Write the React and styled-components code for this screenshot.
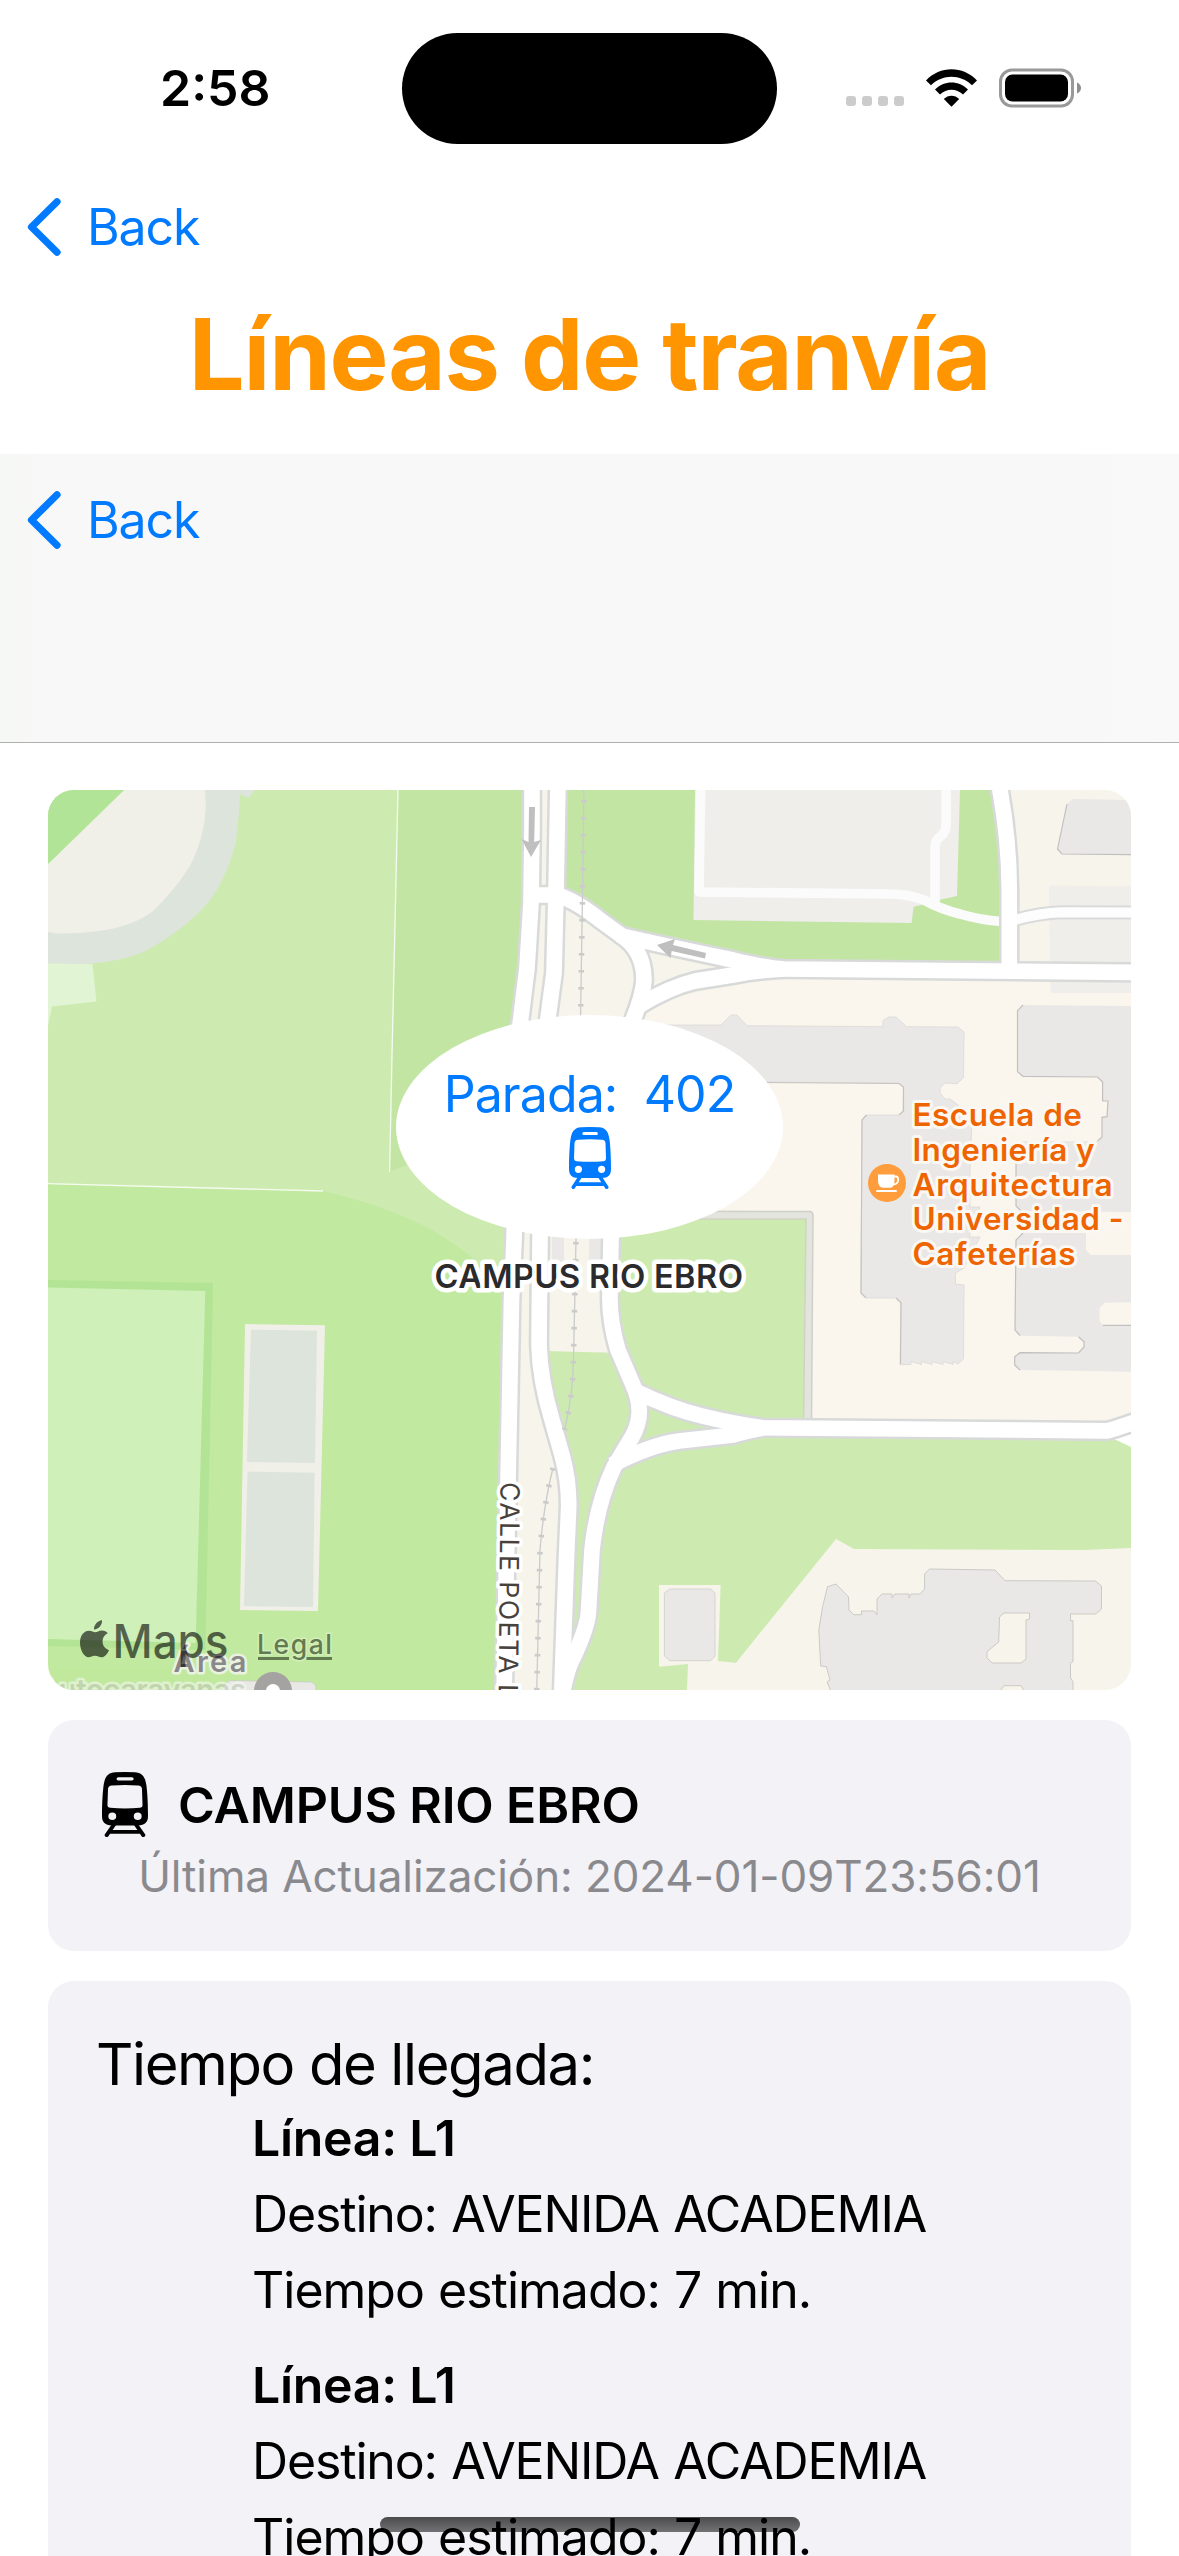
import React from "react";
import styled, { createGlobalStyle } from "styled-components";

const GlobalStyle = createGlobalStyle`
  * { box-sizing: border-box; }
  html, body { margin: 0; padding: 0; background: #fff; }
  body { font-family: Inter, "Liberation Sans", sans-serif; color: #000; overflow: hidden; }
`;

const Screen = styled.main`
  position: relative;
  display: flex;
  flex-direction: column;
  width: 1179px;
  height: 2556px;
  overflow: hidden;
  background: #fff;
`;

const StatusBar = styled.header`
  display: grid;
  grid-template-columns: 402px 375px 402px;
  align-items: center;
  flex: none;
  height: 177px;
`;

const Clock = styled.time`
  margin-bottom: 2px;
  padding-left: 160px;
  font-size: 50px;
  font-weight: 600;
  line-height: 60px;
  white-space: nowrap;
`;

const Island = styled.div`
  height: 111px;
  border-radius: 56px;
  background: #000;
`;

const Indicators = styled.div`
  display: flex;
  align-items: center;
  height: 40px;
  margin-bottom: 2px;
  padding-left: 69px;
`;

const SignalDots = styled.div`
  display: flex;
  align-self: flex-end;
  gap: 6px;
  margin: 0 22px 2px 0;
`;

const Dot = styled.span`
  width: 10px;
  height: 10px;
  border-radius: 3px;
  background: #ccc;
`;

const WifiGlyph = styled.svg`
  width: 51px;
  height: 38px;
  margin-right: 22px;
`;

const BatteryGlyph = styled.svg`
  width: 83px;
  height: 40px;
`;

const NavBar = styled.nav`
  display: flex;
  align-items: center;
  flex: none;
  height: 99px;
  padding-left: 26px;
`;

const BackButton = styled.a`
  display: flex;
  align-items: center;
  gap: 25px;
  color: #007aff;
  font-size: 50px;
  line-height: 60px;
  letter-spacing: -1.1px;
`;

const Chevron = styled.svg`
  width: 36px;
  height: 60px;
`;

const PageTitle = styled.h1`
  flex: none;
  height: 178px;
  margin: 0;
  text-align: center;
  color: #ff9500;
  font-size: 99px;
  font-weight: 700;
  line-height: 156px;
  letter-spacing: -1.2px;
  white-space: nowrap;
`;

const InnerBar = styled.section`
  flex: none;
  height: 289px;
  padding-top: 16px;
  border-bottom: 1px solid #b0b0b0;
  background: linear-gradient(90deg, #f6f8f5 0, #f8f8f8 60px, #f8f8f8 1080px, #f9f9f9 100%);
`;

const Content = styled.div`
  display: flex;
  flex-direction: column;
  flex: none;
  gap: 30px;
  padding: 47px 48px 0;
`;

const MapFrame = styled.section`
  position: relative;
  height: 900px;
  border-radius: 26px;
  overflow: hidden;
`;

const MapCanvas = styled.svg`
  display: block;
  width: 1083px;
  height: 900px;
  font-family: Inter, "Liberation Sans", sans-serif;
`;

const StopMarker = styled.div`
  position: absolute;
  left: 348px;
  top: 225px;
  display: flex;
  flex-direction: column;
  align-items: center;
  width: 387px;
  height: 224px;
  padding-top: 49px;
  border-radius: 50%;
  background: #fff;
  color: #007aff;
  font-size: 50px;
  line-height: 60px;
  letter-spacing: -0.9px;
  white-space: pre;
`;

const TramGlyph = styled.svg`
  flex: none;
  width: ${(p) => p.$w}px;
  height: ${(p) => p.$h}px;
  margin-top: ${(p) => p.$top || 0}px;
`;

const Card = styled.section`
  display: flex;
  flex-direction: column;
  height: ${(p) => p.$h}px;
  padding: ${(p) => p.$pad};
  border-radius: 26px;
  background: #f2f2f7;
`;

const StopRow = styled.div`
  display: flex;
  align-items: center;
  gap: 30px;
  height: 67px;
  padding-left: 6px;
`;

const StopName = styled.h2`
  margin: 0;
  font-size: 50px;
  font-weight: 600;
  line-height: 60px;
  letter-spacing: -0.15px;
  white-space: nowrap;
`;

const Updated = styled.p`
  margin: 11px 0 0;
  text-align: center;
  color: #8a8a8e;
  font-size: 44px;
  line-height: 54px;
  letter-spacing: -0.1px;
  white-space: nowrap;
`;

const ArrivalsTitle = styled.h3`
  margin: 0;
  font-size: 58px;
  font-weight: 400;
  line-height: 71px;
  letter-spacing: -1.4px;
  white-space: nowrap;
`;

const ArrivalList = styled.ul`
  display: flex;
  flex-direction: column;
  gap: 19px;
  margin: 0;
  padding: 0 0 0 156px;
  list-style: none;
`;

const Arrival = styled.li`
  display: flex;
  flex-direction: column;
`;

const ArrivalLine = styled.span`
  font-size: 50px;
  font-weight: ${(p) => (p.$strong ? 600 : 400)};
  line-height: 76px;
  letter-spacing: ${(p) => p.$track}px;
  word-spacing: ${(p) => p.$gap || 0}px;
  white-space: nowrap;
`;

const HomeIndicator = styled.div`
  position: absolute;
  left: 380px;
  top: 2517px;
  width: 420px;
  height: 15px;
  border-radius: 8px;
  background: linear-gradient(rgba(0, 0, 0, 0.69), rgba(0, 0, 0, 0.53));
`;

const arrivals = [
  { line: "L1", destination: "AVENIDA ACADEMIA", minutes: 7 },
  { line: "L1", destination: "AVENIDA ACADEMIA", minutes: 7 },
];

function Tram({ w, h, top }) {
  return (
    <TramGlyph $w={w} $h={h} $top={top} viewBox="0 0 42 62" preserveAspectRatio="none" aria-hidden="true">
      <path
        fill="currentColor"
        fillRule="evenodd"
        d="M12 .3Q21-.3 30 .3C37 .8 39.5 5 40.6 13C41.5 21 42 30 42 42C42 48 39 51 33 51H9C3 51 0 48 0 42C0 30 .5 21 1.4 13C2.5 5 5 .8 12 .3ZM14.8 5A1.5 1.5 0 0 0 14.8 8H27.4A1.5 1.5 0 0 0 27.4 5ZM9 12.8Q21 11.8 33 12.8Q36.3 13 36.5 16L37 31.5Q37 34 34.5 34.2Q21 35.2 7.5 34.2Q5 34 5 31.5L5.5 16Q5.7 13 9 12.8ZM9.4 38.7A3.6 3.6 0 1 0 9.4 45.9A3.6 3.6 0 1 0 9.4 38.7ZM32.6 38.7A3.6 3.6 0 1 0 32.6 45.9A3.6 3.6 0 1 0 32.6 38.7Z"
      />
      <path d="M11 50L4.3 60.2M31 50L37.7 60.2M7.5 57.1H34.5" fill="none" stroke="currentColor" strokeWidth="3.6" strokeLinecap="round" />
    </TramGlyph>
  );
}

function Back() {
  return (
    <NavBar>
      <BackButton>
        <Chevron viewBox="0 0 36 60" aria-hidden="true">
          <path d="M31 4.8L5.5 30L31 55.2" fill="none" stroke="#007aff" strokeWidth="7.2" strokeLinecap="round" strokeLinejoin="round" />
        </Chevron>
        Back
      </BackButton>
    </NavBar>
  );
}

const roads = [
  "M532 780V830L531 903L527 968L520 1025L514 1240L511.500 1300L505 1640L504 1700",
  "M558 780L556 893L554 973L548 1018L540 1240L539 1345Q540 1380 552 1420L562 1455Q569 1480 568.700 1507L566.500 1557L561.500 1700",
  "M532 895H557Q575 900 600 920L622 936Q680 949 733 960Q765 968 784 969L1140 972.500",
  "M619 934Q644 949 644 980Q643 995 633 1020L611 1240L610 1293Q609 1320 618 1350L633 1385Q646 1413 632 1437L614 1467Q597 1503 592 1550L588.400 1613Q587 1628 574 1656Q567 1668 562 1695",
  "M640 1005Q670 987 695 981L733 975Q760 970 784 969",
  "M635 1391Q672 1409 702 1416Q735 1424 763 1427.700L1107 1430.900Q1118 1428 1140 1420",
  "M612 1465Q650 1445 679 1441L733 1435Q750 1430 763 1428",
  "M996 770Q1009 830 1009.300 890V972",
];

const rails = [
  "M584 783L582.500 895L580.600 1013L576 1240L573.500 1360Q573 1395 564.500 1430",
  "M553 1468Q544 1503 540 1550L536.500 1700",
];

const poi = [
  { text: "Escuela de", y: 1126, w: 169.5 },
  { text: "Ingeniería y", y: 1161, w: 182 },
  { text: "Arquitectura", y: 1195.5, w: 200 },
  { text: "Universidad -", y: 1230, w: 211 },
  { text: "Cafeterías", y: 1264.5, w: 163 },
];

function Halo({ children, halo = "#fff", haloWidth = 7, ...rest }) {
  return (
    <text stroke={halo} strokeWidth={haloWidth} strokeLinejoin="round" paintOrder="stroke" lengthAdjust="spacing" {...rest}>
      {children}
    </text>
  );
}

function CampusMap() {
  return (
    <MapCanvas viewBox="48 790 1083 900">
      <rect x="48" y="790" width="1083" height="900" fill="#f7f4eb" />

      {/* west parkland */}
      <path fill="#cdebb0" d="M48 790H522L500 1340L48 1340Z" />
      <path fill="#c3e5a4" d="M398 790H524L520 960L505 1130L407 1165L389.600 1172Z" />
      <path fill="#c1e99f" d="M48 1184L323 1191Q385 1205 432 1230Q465 1250 482 1266Q500 1280 512 1290L504 1690H48Z" />
      <path fill="none" stroke="#f5fbef" strokeWidth="1.300" d="M398 790L395 924L392 1055L389.600 1172M48 1183.700L190 1187.500L323 1191" />

      {/* stadium */}
      <path fill="#dce4db" d="M204 790H255L248.500 798L240 794L239 812L236 841Q230 870 211 899Q198 916 173 934Q150 950 136 955Q105 965 66 964.500L48 963.500V920L180 860Z" />
      <path fill="#f0efe8" d="M124 790H205L206 807Q204 840 190 866Q175 890 153 911Q137 924 106 930Q80 934 56 933.500L48 932V864Z" />
      <path fill="#b1e496" d="M48 790H124L48 864Z" />
      <path fill="#e1f4d4" d="M48 963.500L92.500 964L96.500 1001.500L52 1006.500L48 1026Z" />

      {/* playing field and courts */}
      <path fill="#b3e496" d="M48 1280L213 1283L205.400 1650L48 1646Z" />
      <path fill="#cff0b9" d="M48 1287.500L205.300 1291L195.600 1643L48 1639Z" />
      <path fill="#f0efe8" d="M245 1324L325 1325.300L318 1611L240 1610Z" />
      <path fill="#dce4db" d="M251 1329.700L317 1330.700L315 1463L247 1462ZM247.600 1471.700L314.600 1472.700L313 1607L244 1606Z" />
      <path fill="#e9e8e6" stroke="#c8d3bd" d="M222 1692L224 1685.700L229.600 1680.500L312 1682L316 1685.700V1692Z" />

      {/* north block */}
      <path fill="#c3e5a4" d="M562 790H990L1005 860V972L784 969L620 934L580 903L562 894Z" />
      <path fill="#efeeeb" d="M695 790H960L957 896L941 899.500L913.500 907L911.600 923L693.500 920Z" />
      <path fill="none" stroke="#fbfbfb" strokeWidth="9.600" strokeLinejoin="round" d="M700.700 786L699 892L890 894Q908 894 924 900Q940 909 960 914Q980 920 1002 921.500M946 786V825Q946 832 941 836Q935 840 935 848V903" />
      <path fill="#efeeeb" d="M1049 885.500L1131 886V994L1050.600 993Z" />
      <path fill="#e9e8e6" d="M1067 804L1073 799L1131 800V854.700L1062 854L1057.500 849Z" />
      <path fill="none" stroke="#c1c0be" strokeWidth="1.200" d="M1067 804L1057.500 849L1062 854L1131 854.700" />

      {/* campus */}
      <path fill="#faf6ee" d="M634 1030L660 1000L784 975L1050 977V993H1131V1424L812 1422V1212H640Z" />
      <path
        fill="#e9e8e6"
        stroke="#dbd9d5"
        strokeWidth=".8"
        d="M650 1025H721L731 1015H737L747 1025.700L883 1026.700V1020.700L888.700 1017H896L906.600 1026.700L958 1027L964 1032L963.500 1077.700L957 1083.700L945 1083L940 1088V1093L945 1099H950L958 1105L971.700 1128L970 1173V1207H980L969 1237H980L964 1268L955.500 1273V1284L964 1285L963.500 1359L958 1364L953 1361.500V1364.500L943 1361.500V1364.500L932 1361.500V1364.500L921.500 1361.500V1364.500L911 1361.500V1364.500L900 1364.700L901 1302.700L896 1298H866L861 1293L862 1120L866.500 1115H899L903 1111L903.500 1087L899 1083L763 1082H650Z"
      />
      <path fill="none" stroke="#c5c3c0" strokeWidth="1.200" d="M763 1082.500L899 1083.500L903.500 1087V1111L899 1115M866.500 1115L862 1120L861 1293L866 1298M896 1298L901 1302.700L900.500 1364" />
      <path fill="#e9e8e6" d="M1023 1005L1131 1006V1212L1021 1211L1016 1205.700V1145L1023 1141H1097.600L1102 1137V1117.300L1107 1116.700L1108 1101H1102.600V1081.700L1097.600 1076.700L1023 1076L1017.500 1071.700V1010.700Z" />
      <path fill="none" stroke="#c1c0be" strokeWidth="1.200" d="M1023 1005L1017.500 1010.700V1071.700L1023 1076.300L1097.600 1077L1102.600 1082V1101H1108L1107 1116.700L1102 1117.300V1137L1097.600 1141M1016 1145V1206L1021 1211" />
      <path
        fill="#e9e8e6"
        d="M1023 1233H1086V1250L1091 1255H1131V1302.300L1105 1302.700L1099.500 1308V1321L1103 1325H1131V1371.700L1020 1370L1014.700 1365V1356.700L1020 1352.700L1078.500 1353L1084 1347V1341.700L1078.500 1336.700L1020 1335.700L1014.700 1330L1016 1240Z"
      />
      <path fill="none" stroke="#c1c0be" strokeWidth="1.200" d="M1023 1233L1016 1240L1015 1330L1020 1335.500M1078.500 1336.700L1084 1341.700V1347L1078.500 1353L1020 1352.700L1014.700 1356.700V1365L1020 1370M1103 1325.300H1131" />

      {/* central lawns */}
      <path fill="#e4e4df" stroke="#cfd0ca" strokeWidth="1.500" d="M600 1211L811 1211.500L813 1214L811.500 1424H600Z" />
      <path fill="#cdebb0" stroke="#cfd3c4" strokeWidth="1.500" d="M616 1219H806L803.500 1424H616Z" />
      <path fill="#f7f4eb" d="M540 1200H611L610 1330L618 1353L548 1351L538 1300Z" />
      <path fill="#e9e8e6" d="M552 1230H564V1268H552ZM589 1230H603V1268H589Z" />
      <path
        fill="#cdebb0"
        fillRule="evenodd"
        d="M547 1351L618 1353L650 1400L763 1428L1131 1431V1548L1084 1550L854 1549L836 1539L736 1662.700L718 1661L720.600 1585H659V1666.700L688 1664L687 1690H562L570 1500Q562 1460 552 1420Z"
      />
      <path fill="#fff" d="M1112 1438L1131 1447V1430Z" />
      <path fill="#e9e8e6" stroke="#d5d4d0" strokeWidth="1" d="M669.800 1589H710.600L715 1593V1656L710.600 1660.700H669.800L664.400 1656V1593Z" />

      {/* south-east building */}
      <path
        fill="#e9e8e6"
        fillRule="evenodd"
        stroke="#cbcac6"
        strokeWidth="1"
        d="M836 1584L827.500 1586.700L822.600 1606.700L818.800 1630L820.700 1666L826.400 1666.700L830 1680L827 1682L831 1691H1000L1004 1685.700H1021L1024 1691H1073V1681.700L1070.500 1678V1663L1073 1661.700V1620.700H1070.500V1614H1095.700L1101.500 1609V1586L1095.700 1581L1005 1580.700L995 1570L929.500 1569L924.600 1574V1589L920 1594H911L909 1598V1594H895L892 1598V1594H882L877 1599V1615L874 1611H861.500V1614.700H853.500L849 1610L848.500 1597ZM1004 1613H1029.600V1619L1026 1620V1659L1021 1663H992L987 1657.700V1651.700L998.700 1642L999.500 1617Z"
      />

      {/* roads: casing first, then surface */}
      <g fill="none" strokeLinejoin="round">
        <path stroke="#d9dbda" strokeWidth="14" d="M1012 921Q1035 913.500 1061 912.300L1140 912.500" />
        {roads.map((d) => (
          <path key={d} d={d} stroke="#d8dad9" strokeWidth="20.600" />
        ))}
        <path stroke="#fdfdfd" strokeWidth="10" d="M1008 922Q1035 913.500 1061 912.300L1140 912.500" />
        {roads.map((d) => (
          <path key={d} d={d} stroke="#fff" strokeWidth="15.600" />
        ))}
        {rails.map((d) => (
          <g key={d} stroke="#cacbca">
            <path d={d} strokeWidth="1.300" />
            <path d={d} strokeWidth="5.500" strokeDasharray="2.600 14.400" />
          </g>
        ))}
      </g>

      <g fill="#bfbfbf">
        <path d="M529 807H535L534.200 842L541 840L531 857L521.500 839L528.500 842Z" />
        <path d="M657 945L675 939L673 945L706 953L705 958.500L671.700 951L670.500 958Z" />
      </g>

      <Halo x="0" y="0" transform="translate(500.500 1482) rotate(90.500)" fontSize="26.500" textLength="217" haloWidth={7} fill="#47413c">
        CALLE POETA L
      </Halo>

      <Halo x="434.500" y="1288" fontSize="33" fontWeight="600" textLength="308.500" haloWidth={9} fill="#2b2b2d">
        CAMPUS RIO EBRO
      </Halo>

      <circle cx="887" cy="1183" r="19" fill="#ff9c3c" />
      <path fill="#fff" d="M878 1174.500H894.500V1181Q894.500 1187.700 890 1187.700H883Q878.500 1187.700 878 1181Z" />
      <path fill="none" stroke="#fff" strokeWidth="1.800" d="M893.500 1176.500H896Q898.200 1176.500 898.200 1180Q898 1184.500 892.500 1184.500" />
      <rect x="876" y="1190" width="21" height="2" rx="1" fill="#fff" />
      {poi.map((l) => (
        <Halo key={l.text} x="912.500" y={l.y} fontSize="31.500" fontWeight="600" textLength={l.w} haloWidth={6} halo="#fbf8f4" fill="#ee6400">
          {l.text}
        </Halo>
      ))}

      <circle cx="273" cy="1691" r="19" fill="#a5a3a1" />
      <circle cx="273" cy="1691" r="7" fill="#fff" />
      <Halo x="173.500" y="1672" fontSize="29" fontWeight="600" textLength="73" haloWidth={5} halo="#e9f3e0" fill="#89888b">
        Área
      </Halo>
      <g opacity=".6">
        <Halo x="38" y="1700" fontSize="29" fontWeight="600" textLength="208" haloWidth={5} halo="#f3f7ee" fill="#c0c8b8">
          Autocaravanas
        </Halo>
      </g>

      <g fill="#000" fillOpacity=".6">
        <path d="M102 1620.300C102.500 1624.500 98.500 1629.700 94 1629.500C93.500 1625 98 1620.600 102 1620.300ZM107.800 1633.300C103.800 1635.500 102.500 1638.500 102.600 1642C102.700 1646 105.300 1648.500 109 1650.200C107.500 1653.800 104.500 1657.300 101.500 1657.300C99 1657.300 98 1655.800 95 1655.800C92 1655.800 91 1657.300 88.500 1657.300C84.500 1657.300 80 1650.500 80 1642.500C80 1635.500 84 1630.700 89 1630.700C91.700 1630.700 93.500 1632.300 95.200 1632.300C97 1632.300 98.800 1630.500 102 1630.500C104.300 1630.500 106.500 1631.500 107.800 1633.300Z" />
        <text x="112.500" y="1657.700" fontSize="46.500" fontWeight="500" textLength="116" lengthAdjust="spacingAndGlyphs">
          Maps
        </text>
      </g>
      <text x="257" y="1653.500" fontSize="26.500" fontWeight="500" fill="#637b50" textLength="75" stroke="#d3efba" strokeWidth="3" paintOrder="stroke">
        Legal
      </text>
      <path d="M258 1658.500H289M306.500 1658.500H332" stroke="#637b50" strokeWidth="3" />
    </MapCanvas>
  );
}

export default function App() {
  return (
    <>
      <GlobalStyle />
      <Screen>
        <StatusBar>
          <Clock>2:58</Clock>
          <Island />
          <Indicators>
            <SignalDots>
              <Dot />
              <Dot />
              <Dot />
              <Dot />
            </SignalDots>
            <WifiGlyph viewBox="0 0 51 38" aria-hidden="true">
              <path d="M0 11.500C14-3.500 37-3.500 51 11.500L46 16.300C34.500 4.800 16.500 4.800 5 16.300Z" />
              <path d="M9 20.500C18 11 33 11 42 20.500L37 25.500C30.500 19 20.500 19 14 25.500Z" />
              <path d="M17.800 30C22 25.500 29 25.500 33.200 30L25.500 37.800Z" />
            </WifiGlyph>
            <BatteryGlyph viewBox="0 0 83 40" aria-hidden="true">
              <rect x="1.500" y="2" width="72" height="36" rx="11.500" fill="none" stroke="#999" strokeWidth="3" />
              <rect x="6" y="6.500" width="63" height="27" rx="7.500" />
              <path d="M78 14.500Q82 16.500 82 20T78 25.500Z" fill="#8e8e8e" />
            </BatteryGlyph>
          </Indicators>
        </StatusBar>
        <Back />
        <PageTitle>Líneas de tranvía</PageTitle>
        <InnerBar>
          <Back />
        </InnerBar>
        <Content>
          <MapFrame>
            <CampusMap />
            <StopMarker>
              <span>{"Parada:  402"}</span>
              <Tram w={42} h={62} top={3} />
            </StopMarker>
          </MapFrame>
          <Card $h={231} $pad="51px 48px 0">
            <StopRow>
              <Tram w={46} h={65} />
              <StopName>CAMPUS RIO EBRO</StopName>
            </StopRow>
            <Updated>Última Actualización: 2024-01-09T23:56:01</Updated>
          </Card>
          <Card $h={640} $pad="48px 48px 0">
            <ArrivalsTitle>Tiempo de llegada:</ArrivalsTitle>
            <ArrivalList>
              {arrivals.map((a, i) => (
                <Arrival key={i}>
                  <ArrivalLine $strong $track={-0.3}>{`Línea: ${a.line}`}</ArrivalLine>
                  <ArrivalLine $track={-1.15} $gap={1.5}>{`Destino: ${a.destination}`}</ArrivalLine>
                  <ArrivalLine $track={-1} $gap={1}>{`Tiempo estimado: ${a.minutes} min.`}</ArrivalLine>
                </Arrival>
              ))}
            </ArrivalList>
          </Card>
        </Content>
        <HomeIndicator />
      </Screen>
    </>
  );
}
